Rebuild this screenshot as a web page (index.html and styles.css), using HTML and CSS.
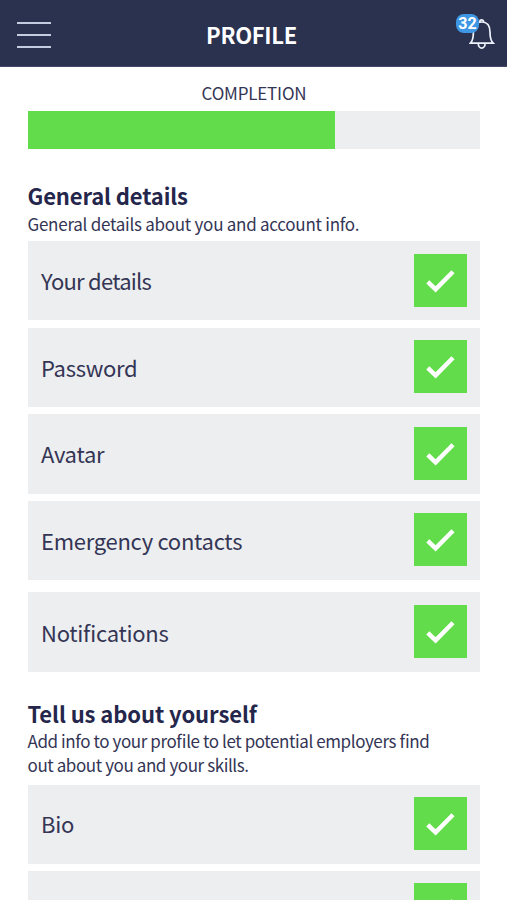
FILE: index.html
```html
<!DOCTYPE html>
<html lang="en">
<head>
<meta charset="utf-8">
<title>Profile</title>
<link rel="stylesheet" href="styles.css">
</head>
<body>
<svg class="defs" width="0" height="0" aria-hidden="true">
  <symbol id="check" viewBox="0 0 53 53"><path d="M13.8 27.9 21.6 35.4 39 17.7" fill="none" stroke="#fff" stroke-width="4.4"/></symbol>
</svg>
<header class="topbar">
  <div class="menu"><i></i><i></i><i></i></div>
  <h1 class="title">PROFILE</h1>
  <div class="alerts">
    <svg class="bell" width="26" height="32" viewBox="0 0 26 32" fill="none" stroke="#edf2fb" stroke-width="1.7">
      <path d="M1.4 25.2C4 22.6 4.4 19.5 4.4 14C4.4 7.5 7.6 4 12.7 4S21 7.5 21 14C21 19.5 21.4 22.6 24.2 25.2Z"/>
      <path d="M10.9 4V3.4a1.8 1.6 0 0 1 3.6 0V4M9.3 25.6a3.4 4.6 0 0 0 6.8 0"/>
    </svg>
    <span class="badge">32</span>
  </div>
</header>
<main class="content">
  <p class="completion">COMPLETION</p>
  <div class="progress"><div class="bar"></div></div>
  <section class="group">
    <h2>General details</h2>
    <p class="intro">General details about you and account info.</p>
    <div class="rows">
      <div class="row"><span class="tight">Your details</span><svg class="tick"><use href="#check"/></svg></div>
      <div class="row"><span>Password</span><svg class="tick"><use href="#check"/></svg></div>
      <div class="row"><span>Avatar</span><svg class="tick"><use href="#check"/></svg></div>
      <div class="row"><span>Emergency contacts</span><svg class="tick"><use href="#check"/></svg></div>
      <div class="row spaced"><span>Notifications</span><svg class="tick"><use href="#check"/></svg></div>
    </div>
  </section>
  <section class="group about">
    <h2>Tell us about yourself</h2>
    <p class="intro">Add info to your profile to let potential employers find<br>out about you and your skills.</p>
    <div class="rows">
      <div class="row"><span>Bio</span><svg class="tick"><use href="#check"/></svg></div>
      <div class="row"><span></span><svg class="tick"><use href="#check"/></svg></div>
    </div>
  </section>
</main>
</body>
</html>
```

FILE: styles.css
```css
* { box-sizing: border-box; }
html { height: 100%; overflow: hidden; }
body {
  margin: 0;
  height: 900px;
  overflow: hidden;
  background: #fff;
  color: #343555;
  font-family: "Noto Sans CJK SC", "Open Sans", sans-serif;
  font-feature-settings: "liga" 1;
}
h1, h2, p { margin: 0; }
.defs { display: block; }
.topbar {
  height: 67px;
  display: grid;
  grid-template-columns: 60px 1fr 60px;
  background: #2b3250;
  border-bottom: 1px solid #45496a;
}
.menu { padding: 22px 0 0 17px; }
.menu i {
  display: block;
  width: 34px;
  height: 2px;
  margin-bottom: 10px;
  background: #c5cce0;
}
.title {
  padding: 17px 4px 0 0;
  color: #fff;
  font-size: 22px;
  line-height: 34px;
  letter-spacing: -0.3px;
  text-align: center;
}
.alerts { position: relative; padding: 18px 0 0 22px; }
.bell { display: block; }
.badge {
  position: absolute;
  left: 9px;
  top: 14px;
  width: 23px;
  height: 19px;
  border-radius: 8px;
  background: #3d97e4;
  color: #fff;
  font: bold 16px/20px Roboto, sans-serif;
  text-align: center;
}
.content { padding: 13px 27px 0 28px; }
.completion {
  font-size: 17px;
  line-height: 26px;
  letter-spacing: -0.2px;
  text-align: center;
}
.progress { height: 37.5px; margin-top: 5px; background: #eceef0; }
.bar { width: 307px; height: 100%; background: #62dc4b; }
.group { padding-top: 30.5px; }
h2 {
  margin: 0 0 1px -0.5px;
  color: #25264b;
  font-size: 22px;
  line-height: 32px;
  letter-spacing: -0.13px;
}
.intro {
  margin-left: -0.5px;
  font-size: 17px;
  line-height: 24px;
  letter-spacing: -0.26px;
}
.rows { display: flex; flex-direction: column; gap: 7.2px; margin-top: 5px; }
.row {
  height: 79.4px;
  flex: none;
  display: flex;
  align-items: center;
  justify-content: space-between;
  padding: 0 13px 1px;
  background: #eceef0;
  font-size: 22px;
  line-height: 32px;
  letter-spacing: -0.28px;
}
.tight { letter-spacing: -0.75px; }
.spaced { margin-top: 5px; }
.tick { width: 53px; height: 53px; background: #62dc4b; }
.about { padding-top: 25px; }
.about h2 { margin-bottom: 0; letter-spacing: -0.08px; }
.about .intro { letter-spacing: -0.41px; }
.about .rows { margin-top: 8px; }
.about .row { padding-bottom: 2px; }
```
